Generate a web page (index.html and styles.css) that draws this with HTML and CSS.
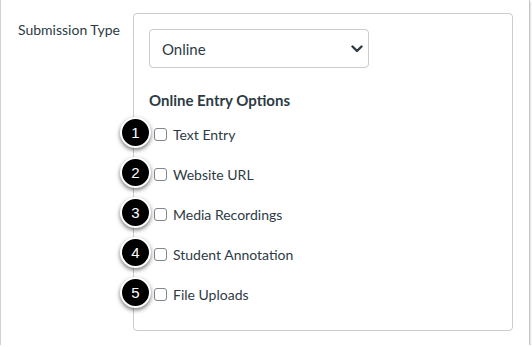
FILE: index.html
```html
<!DOCTYPE html>
<html lang="en">
<head>
    <meta charset="UTF-8">
    <title>Submission Type</title>
    <link rel="stylesheet" href="styles.css">
</head>
<body>
    <div class="frame">
        <div class="field-label">Submission Type</div>
        <div class="field-box">
            <div class="select">
                <span>Online</span>
                <svg class="chevron" width="12" height="8" viewBox="0 0 12 8">
                    <path d="M1.5 1.5 L6 6 L10.5 1.5" fill="none" stroke="#2d3b45" stroke-width="2.4" stroke-linecap="round" stroke-linejoin="round"/>
                </svg>
            </div>
            <h2 class="options-title">Online Entry Options</h2>
            <div class="option"><span class="badge">1</span><span class="checkbox"></span>Text Entry</div>
            <div class="option"><span class="badge">2</span><span class="checkbox"></span>Website URL</div>
            <div class="option"><span class="badge">3</span><span class="checkbox"></span>Media Recordings</div>
            <div class="option"><span class="badge">4</span><span class="checkbox"></span>Student Annotation</div>
            <div class="option"><span class="badge">5</span><span class="checkbox"></span>File Uploads</div>
        </div>
    </div>
</body>
</html>
```
FILE: styles.css
```css
/* Reset and base styles */
* {
    margin: 0;
    padding: 0;
    box-sizing: border-box;
}
body {
    font-family: Lato, "Liberation Sans", sans-serif;
    color: #2d3b45;
    background-color: #fff;
}

/* Outer frame */
.frame {
    display: flex;
    width: 530px;
    height: 345px;
    padding: 13px 0 0 17px;
    border-left: 1px solid #d0d3d5;
    border-right: 1px solid #c4c7c9;
    box-shadow: 0 2px 2px rgba(0,0,0,0.35);
}
.field-label {
    width: 115px;
    font-size: 14px;
    line-height: 20px;
    padding-top: 7px;
}

/* Options box */
.field-box {
    width: 380px;
    height: 318px;
    border: 1px solid #c7cdd1;
    border-radius: 4px;
    padding: 15px 15px;
}
.select {
    display: flex;
    align-items: center;
    justify-content: space-between;
    width: 220px;
    height: 39px;
    border: 1px solid #c7cdd1;
    border-radius: 4px;
    padding: 0 5px 0 12px;
    font-size: 15px;
}
.chevron {
    margin-right: 0;
}
.options-title {
    font-size: 15px;
    font-weight: bold;
    line-height: 20px;
    margin-top: 22px;
    margin-bottom: 4px;
}
.option {
    position: relative;
    display: flex;
    align-items: center;
    height: 40px;
    font-size: 14px;
}
.checkbox {
    width: 13px;
    height: 13px;
    border: 1px solid #7d878e;
    border-radius: 3px;
    margin: 0 6px 0 5px;
    background: #fff;
}

/* Annotation badges */
.badge {
    position: absolute;
    left: -29px;
    top: 3px;
    width: 31px;
    height: 31px;
    border-radius: 50%;
    background: #000;
    border: 2px solid #fff;
    box-shadow: 0 2px 4px rgba(0,0,0,0.55);
    color: #fff;
    font-family: "Liberation Sans", Arial, sans-serif;
    font-size: 15px;
    line-height: 27px;
    text-align: center;
}
```
